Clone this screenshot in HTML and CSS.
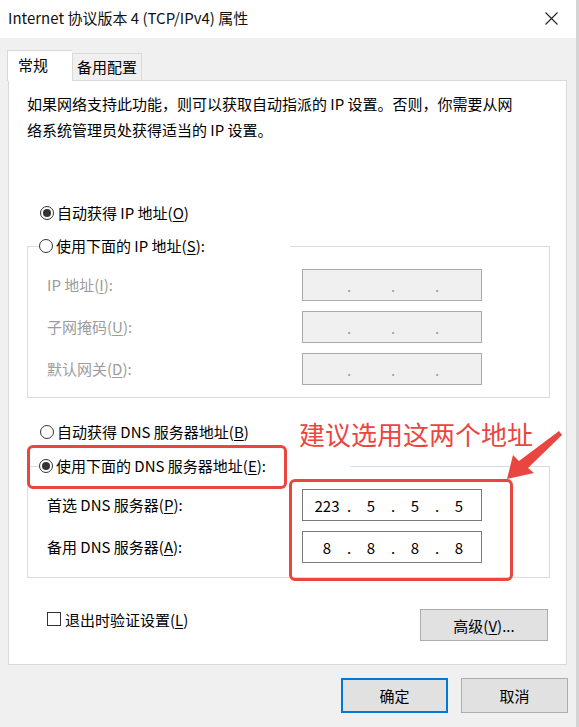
FILE: index.html
```html
<!DOCTYPE html>
<html lang="zh-CN">
<head>
  <meta charset="UTF-8" />
  <meta name="viewport" content="width=device-width, initial-scale=1.0" />
  <title>Internet 协议版本 4 (TCP/IPv4) 属性</title>
  <link rel="stylesheet" href="styles.css">
</head>
<body>
  <div class="window">
    <div class="titlebar">
      <span class="title">Internet 协议版本 4 (TCP/IPv4) 属性</span>
      <svg class="close" width="13" height="13" viewBox="0 0 13 13">
        <path d="M0.5 0.5 L12.5 12.5 M12.5 0.5 L0.5 12.5" stroke="#222" stroke-width="1.1" fill="none" />
      </svg>
    </div>

    <div class="client">
      <div class="tabs">
        <div class="tab active">常规</div>
        <div class="tab">备用配置</div>
      </div>

      <div class="panel">
        <p class="desc">如果网络支持此功能，则可以获取自动指派的 IP 设置。否则，你需要从网<br>络系统管理员处获得适当的 IP 设置。</p>

        <div class="option first">
          <span class="radio on"></span>自动获得 IP 地址(<u>O</u>)
        </div>

        <fieldset class="group ip-group">
          <legend class="option">
            <span class="radio"></span>使用下面的 IP 地址(<u>S</u>):
          </legend>
          <div class="rows disabled">
            <div class="labels">
              <div class="label">IP 地址(<u>I</u>):</div>
              <div class="label">子网掩码(<u>U</u>):</div>
              <div class="label">默认网关(<u>D</u>):</div>
            </div>
            <div class="fields">
              <div class="ipbox"><span></span><i>.</i><span></span><i>.</i><span></span><i>.</i><span></span></div>
              <div class="ipbox"><span></span><i>.</i><span></span><i>.</i><span></span><i>.</i><span></span></div>
              <div class="ipbox"><span></span><i>.</i><span></span><i>.</i><span></span><i>.</i><span></span></div>
            </div>
          </div>
        </fieldset>

        <div class="option dns-auto">
          <span class="radio"></span>自动获得 DNS 服务器地址(<u>B</u>)
        </div>

        <fieldset class="group dns-group">
          <legend class="option">
            <span class="radio on"></span>使用下面的 DNS 服务器地址(<u>E</u>):
            <span class="mark mark-legend"></span>
          </legend>
          <div class="rows">
            <div class="labels">
              <div class="label">首选 DNS 服务器(<u>P</u>):</div>
              <div class="label">备用 DNS 服务器(<u>A</u>):</div>
            </div>
            <div class="fields marked">
              <div class="ipbox"><span>223</span><i>.</i><span>5</span><i>.</i><span>5</span><i>.</i><span>5</span></div>
              <div class="ipbox"><span>8</span><i>.</i><span>8</span><i>.</i><span>8</span><i>.</i><span>8</span></div>
            </div>
          </div>
        </fieldset>

        <div class="bottom-row">
          <label class="check"><span class="box"></span>退出时验证设置(<u>L</u>)</label>
          <button class="btn advanced">高级(<u>V</u>)...</button>
        </div>

        <!-- annotation -->
        <div class="note">建议选用这两个地址</div>
        <svg class="arrow" width="66" height="62" viewBox="500 424 66 62">
          <polygon fill="#ea4641" points="559,431 562,435 528,468 534,473 507,479 513,455 519,461" />
        </svg>
      </div>

      <div class="actions">
        <button class="btn primary">确定</button>
        <button class="btn">取消</button>
      </div>
    </div>
  </div>
</body>
</html>
```

FILE: styles.css
```css
* {
  box-sizing: border-box;
}
html, body {
  margin: 0;
  padding: 0;
}
body {
  font-family: "Noto Sans CJK SC", "Liberation Sans", sans-serif;
  font-size: 15px;
  color: #000;
  background: #fff;
}
u {
  text-decoration-thickness: 1px;
  text-underline-offset: 2px;
}
.window {
  width: 579px;
  height: 727px;
  background: #f0f0f0;
  border-right: 3px solid #d4d4d4;
}
.titlebar {
  height: 38px;
  background: #fff;
  display: flex;
  align-items: center;
  justify-content: space-between;
  padding: 0 18px 2px 8px;
}
.title {
  font-size: 15px;
  line-height: 20px;
  color: #111;
}
.client {
  padding-top: 12px;
}
.tabs {
  display: flex;
  align-items: flex-end;
  padding-left: 7px;
  height: 30px;
  position: relative;
  z-index: 1;
}
.tab {
  height: 27px;
  width: 70px;
  padding: 0 0 0 4px;
  border: 1px solid #d9d9d9;
  border-bottom: none;
  background: #f0f0f0;
  line-height: 26px;
  font-size: 15px;
  white-space: nowrap;
}
.tab.active {
  height: 31px;
  margin-bottom: -1px;
  width: 65px;
  padding-left: 10px;
  background: #fff;
  border-right: none;
  line-height: 28px;
}
.panel {
  position: relative;
  margin-left: 8px;
  width: 559px;
  height: 585px;
  background: #fff;
  border: 1px solid #d9d9d9;
}
.desc {
  margin: 10px 0 0 18px;
  line-height: 26px;
  white-space: nowrap;
}
.option {
  display: flex;
  align-items: center;
  height: 20px;
  line-height: 20px;
  white-space: nowrap;
}
.option.first {
  margin: 60px 0 0 31px;
}
.radio {
  width: 14px;
  height: 14px;
  margin-right: 3px;
  border: 1px solid #333;
  border-radius: 50%;
  display: grid;
  place-items: center;
  flex: none;
}
.radio.on::after {
  content: "";
  width: 8px;
  height: 8px;
  border-radius: 50%;
  background: #333;
}
.group {
  margin: 13px 16px 0 18px;
  padding: 13px 0 12px 0;
  border: 1px solid #dcdcdc;
  min-width: 0;
}
.group legend {
  padding: 0;
  margin-left: 11px;
  position: relative;
}
.ip-group legend {
  width: 251px;
}
.dns-group {
  margin-top: 14px;
  padding-bottom: 14px;
}
.dns-group legend {
  width: 311px;
}
.dns-auto {
  margin: 24px 0 0 31px;
}
.rows {
  display: flex;
  padding-left: 19px;
}
.labels {
  width: 255px;
  display: flex;
  flex-direction: column;
  gap: 10px;
}
.label {
  height: 32px;
  line-height: 32px;
}
.rows.disabled .label {
  color: #9c9c9c;
}
.fields {
  width: 180px;
  display: flex;
  flex-direction: column;
  gap: 10px;
  position: relative;
}
.ipbox {
  height: 32px;
  display: flex;
  align-items: center;
  padding-left: 4px;
  border: 1px solid #7a7a7a;
  background: #fff;
  font-size: 15px;
}
.ipbox span {
  width: 40px;
  text-align: center;
}
.ipbox i {
  font-style: normal;
  width: 4px;
  text-align: center;
}
.rows.disabled .ipbox {
  background: #f0f0f0;
  border-color: #a9a9a9;
  color: #9c9c9c;
}
.mark {
  position: absolute;
  border: 3px solid #e8463f;
  border-radius: 6px;
}
.mark-legend {
  left: -12px;
  top: -11px;
  width: 260px;
  height: 44px;
}
.fields.marked::after {
  content: "";
  position: absolute;
  left: -13px;
  top: -10px;
  right: -31px;
  bottom: -18px;
  border: 3px solid #e8463f;
  border-radius: 6px;
}
.bottom-row {
  display: flex;
  justify-content: space-between;
  align-items: flex-start;
  margin: 31px 18px 0 38px;
}
.check {
  display: flex;
  align-items: center;
  height: 20px;
}
.check .box {
  width: 14px;
  height: 14px;
  margin-right: 4px;
  border: 1px solid #333;
  background: #fff;
}
.btn {
  font-family: inherit;
  font-size: 15px;
  color: #000;
  background: #e1e1e1;
  border: 1px solid #adadad;
  padding: 0;
}
.advanced {
  width: 128px;
  height: 32px;
}
.actions {
  display: flex;
  justify-content: flex-end;
  gap: 13px;
  margin-top: 13px;
  padding-right: 8px;
}
.actions .btn {
  width: 107px;
  height: 35px;
}
.btn.primary {
  border: 2px solid #0078d7;
}
.note {
  position: absolute;
  left: 290px;
  top: 336px;
  font-size: 26px;
  line-height: 34px;
  color: #ea4641;
  white-space: nowrap;
}
.arrow {
  position: absolute;
  left: 491px;
  top: 343px;
}
```
